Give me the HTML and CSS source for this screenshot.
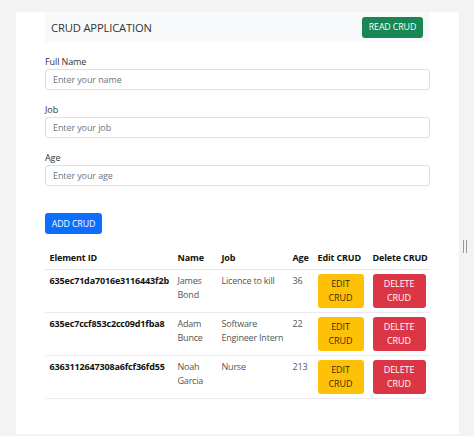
FILE: index.html
```html
<!DOCTYPE html>
<html>
<head>
<meta charset="utf-8">
<link rel="stylesheet" href="styles.css">
</head>
<body>
<div class="card">
  <nav class="header">
    <span class="brand">CRUD APPLICATION</span>
    <button class="btn btn-green">READ CRUD</button>
  </nav>
  <form class="form">
    <label class="label">Full Name</label>
    <input class="input" placeholder="Enter your name">
    <label class="label">Job</label>
    <input class="input" placeholder="Enter your job">
    <label class="label">Age</label>
    <input class="input" placeholder="Enter your age">
    <div class="actions"><button type="button" class="btn btn-blue">ADD CRUD</button></div>
  </form>
  <table class="table">
    <thead>
      <tr><th class="c-id">Element ID</th><th class="c-name">Name</th><th class="c-job">Job</th><th class="c-age">Age</th><th class="c-edit">Edit CRUD</th><th class="c-del">Delete CRUD</th></tr>
    </thead>
    <tbody>
      <tr><td class="id">635ec71da7016e3116443f2b</td><td>James Bond</td><td>Licence to kill</td><td>36</td><td><button class="tbtn btn-yellow">EDIT CRUD</button></td><td><button class="tbtn btn-red">DELETE CRUD</button></td></tr>
      <tr><td class="id">635ec7ccf853c2cc09d1fba8</td><td>Adam Bunce</td><td>Software Engineer Intern</td><td>22</td><td><button class="tbtn btn-yellow">EDIT CRUD</button></td><td><button class="tbtn btn-red">DELETE CRUD</button></td></tr>
      <tr><td class="id">6363112647308a6fcf36fd55</td><td>Noah Garcia</td><td>Nurse</td><td>213</td><td><button class="tbtn btn-yellow">EDIT CRUD</button></td><td><button class="tbtn btn-red">DELETE CRUD</button></td></tr>
    </tbody>
  </table>
</div>
<div class="grip"><span></span><span></span></div>
</body>
</html>
```
FILE: styles.css
```css
html, body {
  margin: 0;
  height: 100%;
}
body {
  background: #f3f3f3;
  font-family: "Open Sans", "Noto Sans", sans-serif;
  font-size: 9px;
  color: #212529;
  padding: 12px 15px 0 16px;
  box-sizing: border-box;
  overflow: hidden;
  position: relative;
}
.card {
  background: #fff;
  height: 422px;
  padding: 0 29px;
  box-sizing: border-box;
}
.header {
  background: #f8f9fa;
  height: 30px;
  display: flex;
  align-items: center;
  justify-content: space-between;
  padding: 0 7px 0 6px;
}
.brand {
  font-size: 11.2px;
  color: #333;
  letter-spacing: -0.15px;
}
.btn {
  border: 0;
  border-radius: 3px;
  color: #fff;
  font-family: inherit;
  font-size: 8.8px;
  height: 21px;
  padding: 0 5px;
  letter-spacing: -0.1px;
}
.btn-green { background: #198754; width: 61px; }
.btn-blue { background: #0d6efd; width: 57px; }
.form {
  display: flex;
  flex-direction: column;
  padding-top: 13px;
}
.label {
  line-height: 14px;
  color: #333;
  margin-bottom: 0;
  letter-spacing: -0.1px;
}
.input {
  height: 21px;
  box-sizing: border-box;
  border: 1px solid #dcdfe3;
  border-radius: 3px;
  padding: 0 7px;
  font-family: inherit;
  font-size: 9px;
  margin-bottom: 13px;
  letter-spacing: -0.1px;
}
.input::placeholder { color: #6c757d; }
.actions { padding-top: 14px; }
.table {
  margin-top: 12px;
  width: 100%;
  border-collapse: collapse;
  table-layout: fixed;
  letter-spacing: -0.2px;
}
.table th {
  text-align: left;
  font-weight: 700;
  color: #111;
  padding: 4.5px 4.5px;
  line-height: 13.5px;
  border-bottom: 1px solid #e4e6e8;
  white-space: nowrap;
  letter-spacing: -0.15px;
}
.table td {
  padding: 4.5px 4.5px 4px;
  line-height: 13.5px;
  vertical-align: top;
  color: #555;
  border-bottom: 1px solid #e9ebed;
}
.table td.id { font-weight: 700; color: #111; white-space: nowrap; letter-spacing: -0.15px; }
.c-id { width: 119px; }
.c-name { width: 35px; }
.c-job { width: 62px; }
.c-age { width: 16px; }
.c-edit { width: 46px; }
.c-del { width: 53px; }
.tbtn {
  display: block;
  width: 100%;
  border: 0;
  border-radius: 3px;
  font-family: inherit;
  font-size: 9px;
  line-height: 13.5px;
  padding: 3.3px 6px;
  text-align: center;
  letter-spacing: -0.1px;
}
.btn-yellow { background: #ffc107; color: #3a2e05; }
.btn-red { background: #dc3545; color: #fff; }
.grip {
  position: absolute;
  left: 463px;
  top: 240px;
  display: flex;
  gap: 2px;
}
.grip span {
  width: 1px;
  height: 13px;
  background: #9a9a9a;
}
```
